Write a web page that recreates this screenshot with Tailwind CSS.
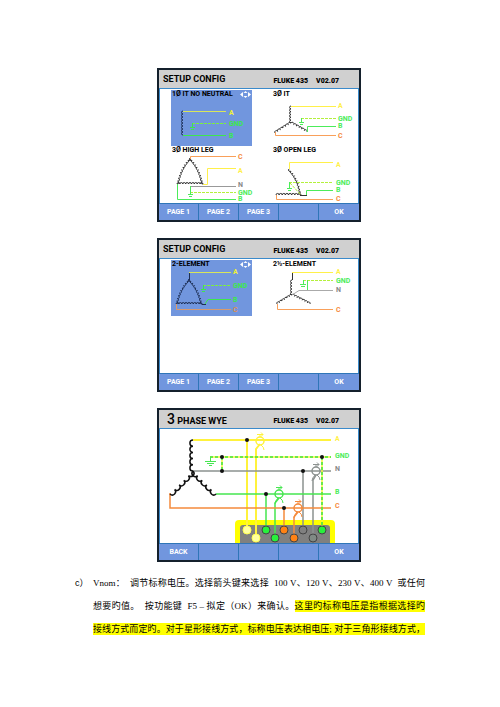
<!DOCTYPE html>
<html lang="zh-CN">
<head>
    <meta charset="UTF-8">
    <meta name="viewport" content="width=device-width, initial-scale=1.0">
    <title>Fluke 435 Setup</title>
    <script src="https://cdn.jsdelivr.net/npm/@tailwindcss/browser@4"></script>
</head>
<body class="bg-white text-black">
    <main class="px-[75px] pt-[68px] pb-12">
        <div class="ml-[18px] flex flex-col items-center gap-4 font-[Roboto,sans-serif]">

            <!-- Page 1 -->
            <section class="w-[204px] border-2 border-[#14202c] bg-white">
                <header class="flex h-[18px] items-center justify-between bg-[#d0d0d0] pl-1 pr-5">
                    <h2 class="text-[9px] leading-none font-bold">SETUP CONFIG</h2>
                    <p class="flex gap-2 pt-1 text-[7px] leading-none font-black"><span>FLUKE 435</span><span>V02.07</span></p>
                </header>
                <div class="grid grid-cols-[81px_81px] gap-x-5 border-x border-t border-[#3a8acb] pl-[11px] pt-px pb-px">
                    <div class="bg-[#7196de]">
                        <h3 class="flex h-2 items-center justify-between px-px text-[7px] leading-none font-bold whitespace-nowrap">1Ø IT NO NEUTRAL
                            <svg class="h-[7px] w-[11px] shrink-0 fill-white" viewBox="0 0 11 7"><path d="M0 3.5 3 1v5zM11 3.5 8 1v5zM5.5 0 7.5 2h-4zM5.5 7 7.5 5h-4z"/></svg>
                        </h3>
                        <svg class="block h-12 w-[81px] fill-none text-[7px] font-bold" viewBox="0 0 81 48">
                            <path class="coil" stroke="#1c2e55" d="M12 13V37"/>
                            <path stroke="#d9e65a" d="M12 13.5H55"/>
                            <path stroke="#7df03c" stroke-dasharray="3 1" d="M21 25.5H55"/>
                            <path stroke="#3ce84b" d="M21.5 25v4M19 29.5h5M20 31.5h3M12 37.5H55"/>
                            <text x="58" y="17" fill="#f2f234">A</text>
                            <text x="58" y="28" fill="#3ce84b">GND</text>
                            <text x="58" y="40" fill="#3ce84b">B</text>
                        </svg>
                    </div>
                    <div>
                        <h3 class="flex h-2 items-center px-px text-[7px] leading-none font-bold whitespace-nowrap">3Ø IT</h3>
                        <svg class="block h-12 w-[81px] fill-none text-[7px] font-bold" viewBox="0 0 81 48">
                            <path class="coil" stroke="#333" d="M19 8V25"/>
                            <path class="coil" stroke="#333" d="M19 25L3 35"/>
                            <path class="coil" stroke="#333" d="M35 34L19 25"/>
                            <path stroke="#fff04a" d="M19 8.5H64"/>
                            <path stroke="#b4f03c" stroke-dasharray="3 1" d="M29 20.5H64"/>
                            <path stroke="#4cec5a" d="M29.5 20v4M27 24.5h5M28 26.5h3M35.5 34V28.5H64"/>
                            <path stroke="#f9a05a" d="M3.5 34V37.5H64"/>
                            <text x="66" y="10" fill="#fff04a">A</text>
                            <text x="66" y="23" fill="#4cec5a">GND</text>
                            <text x="66" y="30" fill="#4cec5a">B</text>
                            <text x="66" y="40" fill="#f58a3c">C</text>
                        </svg>
                    </div>
                    <div>
                        <h3 class="flex h-2 items-center px-px text-[7px] leading-none font-bold whitespace-nowrap">3Ø HIGH LEG</h3>
                        <svg class="block h-12 w-[84px] fill-none text-[7px] font-bold" viewBox="0 0 84 48">
                            <path class="coil" stroke="#333" d="M6 30Q9 14 19 4"/>
                            <path class="coil" stroke="#333" d="M19 4Q29 14 32 30"/>
                            <path class="coil" stroke="#333" d="M32 30H6"/>
                            <path stroke="#f9a05a" d="M19.5 5V2.5H65"/>
                            <path stroke="#fff04a" d="M32 30.5H36.5V14.5H65"/>
                            <path stroke="#999" d="M19 32.5H65"/>
                            <path stroke="#b4f03c" stroke-dasharray="3 1" d="M19 38.5H65"/>
                            <path stroke="#4cec5a" d="M19.5 32v8M17 40.5h5M18 42.5h3M6.5 30V45.5H65"/>
                            <text x="67" y="5" fill="#f58a3c">C</text>
                            <text x="67" y="19" fill="#fff04a">A</text>
                            <text x="67" y="33" fill="#888">N</text>
                            <text x="67" y="41" fill="#4cec5a">GND</text>
                            <text x="67" y="47" fill="#4cec5a">B</text>
                        </svg>
                    </div>
                    <div>
                        <h3 class="flex h-2 items-center px-px text-[7px] leading-none font-bold whitespace-nowrap">3Ø OPEN LEG</h3>
                        <svg class="block h-12 w-[81px] fill-none text-[7px] font-bold" viewBox="0 0 81 48">
                            <path class="coil" stroke="#333" d="M17 15Q27 25 29 41"/>
                            <path class="coil" stroke="#333" d="M29 41H4"/>
                            <path stroke="#333" d="M28 41.5H35"/>
                            <path stroke="#fff04a" d="M17.5 15V8.5H61"/>
                            <path stroke="#b4f03c" stroke-dasharray="3 1" d="M17 28.5H61M18 29L29 41"/>
                            <path stroke="#4cec5a" d="M17.5 28v6M15 34.5h5M16 36.5h3M34.5 41V36.5H61"/>
                            <path stroke="#f9a05a" d="M4.5 41V45.5H61"/>
                            <text x="64" y="13" fill="#fff04a">A</text>
                            <text x="64" y="31" fill="#4cec5a">GND</text>
                            <text x="64" y="38" fill="#4cec5a">B</text>
                            <text x="64" y="47" fill="#f58a3c">C</text>
                        </svg>
                    </div>
                </div>
                <nav class="grid h-[17px] grid-cols-5 divide-x divide-[#2f76b8] border-t border-[#2f76b8] bg-[#7196de] text-[7px] leading-none font-bold text-white">
                    <button>PAGE 1</button>
                    <button>PAGE 2</button>
                    <button>PAGE 3</button>
                    <button disabled></button>
                    <button>OK</button>
                </nav>
            </section>

            <!-- Page 2 -->
            <section class="w-[204px] border-2 border-[#14202c] bg-white">
                <header class="flex h-[18px] items-center justify-between bg-[#d0d0d0] pl-1 pr-5">
                    <h2 class="text-[9px] leading-none font-bold">SETUP CONFIG</h2>
                    <p class="flex gap-2 pt-1 text-[7px] leading-none font-black"><span>FLUKE 435</span><span>V02.07</span></p>
                </header>
                <div class="grid grid-cols-[81px_81px] gap-x-5 border-x border-t border-[#3a8acb] pl-[11px] pt-px pb-[57px]">
                    <div class="bg-[#7196de]">
                        <h3 class="flex h-2 items-center justify-between px-px text-[7px] leading-none font-bold whitespace-nowrap">2-ELEMENT
                            <svg class="h-[7px] w-[11px] shrink-0 fill-white" viewBox="0 0 11 7"><path d="M0 3.5 3 1v5zM11 3.5 8 1v5zM5.5 0 7.5 2h-4zM5.5 7 7.5 5h-4z"/></svg>
                        </h3>
                        <svg class="block h-12 w-[81px] fill-none text-[7px] font-bold" viewBox="0 0 81 48">
                            <path class="coil" stroke="#1c2e55" d="M5 36Q8 21 18 11"/>
                            <path class="coil" stroke="#1c2e55" d="M18 11Q28 21 31 36"/>
                            <path class="coil" stroke="#1c2e55" d="M31 36H5"/>
                            <path stroke="#1c2e55" d="M18.5 4V12M31 36.5H35"/>
                            <path stroke="#d9e65a" d="M18 4.5H60"/>
                            <path stroke="#7df03c" stroke-dasharray="3 1" d="M32 17.5H60"/>
                            <path stroke="#3ce84b" d="M32.5 17v4M30 21.5h5M31 23.5h3M34 36L37 31.5H60"/>
                            <path stroke="#d99a6c" d="M5.5 36V41.5H60"/>
                            <text x="62" y="6" fill="#f2f234">A</text>
                            <text x="62" y="20" fill="#3ce84b">GND</text>
                            <text x="62" y="34" fill="#3ce84b">B</text>
                            <text x="62" y="44" fill="#e0904c">C</text>
                        </svg>
                    </div>
                    <div>
                        <h3 class="flex h-2 items-center px-px text-[7px] leading-none font-bold whitespace-nowrap">2½-ELEMENT</h3>
                        <svg class="block h-12 w-[81px] fill-none text-[7px] font-bold" viewBox="0 0 81 48">
                            <path class="coil" stroke="#333" d="M20 12V27"/>
                            <path class="coil" stroke="#333" d="M20 27L5 36"/>
                            <path class="coil" stroke="#333" d="M38 36L20 27"/>
                            <path stroke="#333" d="M20.5 4V12"/>
                            <path stroke="#fff04a" d="M20 4.5H61"/>
                            <path stroke="#b4f03c" stroke-dasharray="3 1" d="M31 12.5H61"/>
                            <path stroke="#4cec5a" d="M31.5 12v4M28 16.5h6M29 18.5h4M35.5 12V22"/>
                            <path stroke="#aaa" d="M20 27L27 22.5H61"/>
                            <path stroke="#f9a05a" d="M5.5 36V41.5H61"/>
                            <text x="64" y="6" fill="#fff04a">A</text>
                            <text x="64" y="15" fill="#4cec5a">GND</text>
                            <text x="64" y="24" fill="#888">N</text>
                            <text x="64" y="44" fill="#f58a3c">C</text>
                        </svg>
                    </div>
                </div>
                <nav class="grid h-[17px] grid-cols-5 divide-x divide-[#2f76b8] border-t border-[#2f76b8] bg-[#7196de] text-[7px] leading-none font-bold text-white">
                    <button>PAGE 1</button>
                    <button>PAGE 2</button>
                    <button>PAGE 3</button>
                    <button disabled></button>
                    <button>OK</button>
                </nav>
            </section>

            <!-- Wiring diagram -->
            <section class="w-[204px] border-2 border-[#14202c] bg-white">
                <header class="flex h-[18px] items-center justify-between bg-[#d0d0d0] pl-2 pr-5">
                    <h2 class="text-[9px] leading-none font-bold"><span class="text-[14px] font-medium">3</span> PHASE WYE</h2>
                    <p class="flex gap-2 pt-1 text-[7px] leading-none font-black"><span>FLUKE 435</span><span>V02.07</span></p>
                </header>
                <div class="border-t border-[#3a8acb]">
                    <svg class="block h-[114px] w-full border-x border-[#3a8acb] fill-none text-[7px] font-bold" viewBox="1 0 198 114">
                        <defs>
                            <g id="clamp">
                                <circle r="4" stroke-width="1.5"/>
                                <path d="M-4 10Q-4 7 -1 4M1 4Q4 6 4 9M-3 -6.5H3M1 -8.5L3 -6.5L1 -4.5M0 -4V-6"/>
                            </g>
                        </defs>
                        <path fill="#ffff00" d="M76 114V95a4 4 0 0 1 4-4h92a4 4 0 0 1 4 4v19z"/>
                        <path fill="#808080" d="M81 114V99a3 3 0 0 1 3-3h84a3 3 0 0 1 3 3v15z"/>

                        <path stroke="#fff23c" stroke-width="2" d="M34 11H172M88 11V101M97 109V20L101 15"/>
                        <path stroke="#8c9290" stroke-width="1.5" d="M34 42H172M144 42V101M154 109V51L157 46"/>
                        <path stroke="#46e650" stroke-width="1.5" d="M57 65H172M107 65V101M116 109V74L120 69"/>
                        <path stroke="#f58a3c" stroke-width="1.5" d="M11 64V79H172M125 79V101M135 109V88L139 83"/>
                        <path stroke="#f4f43c" stroke-width="1.5" d="M51 28H172M63 28V42M163 28V101"/>
                        <path stroke="#3ce63c" stroke-width="1.5" stroke-dasharray="3 2" d="M51 28H172M63 28V42M163 28V101"/>
                        <path stroke="#46e650" d="M51.5 28V32M46 32.5H57M48 34.5H55M50 36.5H53"/>

                        <path class="coil" data-step="6" stroke="#111" stroke-width="1.5" d="M34 11V42"/>
                        <path class="coil" data-step="6" stroke="#111" stroke-width="1.5" d="M11 65L34 42"/>
                        <path class="coil" data-step="6" stroke="#111" stroke-width="1.5" d="M34 42L57 65"/>

                        <use href="#clamp" x="101" y="12" stroke="#fff23c"/>
                        <use href="#clamp" x="157" y="42" stroke="#8c9290"/>
                        <use href="#clamp" x="120" y="65" stroke="#46e650"/>
                        <use href="#clamp" x="139" y="79" stroke="#f58a3c"/>

                        <g fill="#111">
                            <circle cx="88" cy="11" r="2"/>
                            <circle cx="63" cy="28" r="2"/>
                            <circle cx="63" cy="42" r="2"/>
                            <circle cx="163" cy="28" r="2"/>
                            <circle cx="144" cy="42" r="2"/>
                            <circle cx="107" cy="65" r="2"/>
                            <circle cx="125" cy="79" r="2"/>
                        </g>
                        <g stroke="#444">
                            <circle cx="88" cy="101" r="4" fill="#ffffa0" stroke="#ffff50"/>
                            <circle cx="97" cy="109" r="4" fill="#ffffa0" stroke="#ffff50"/>
                            <circle cx="107" cy="101" r="4" fill="#28f03c"/>
                            <circle cx="116" cy="109" r="4" fill="#28f03c"/>
                            <circle cx="125" cy="101" r="4" fill="#ff8214"/>
                            <circle cx="135" cy="109" r="4" fill="#ff8214"/>
                            <circle cx="144" cy="101" r="4" fill="#808080"/>
                            <circle cx="154" cy="109" r="4" fill="#808a84"/>
                            <circle cx="163" cy="101" r="4" fill="#28f03c"/>
                        </g>
                        <text x="176" y="12" fill="#fff04a">A</text>
                        <text x="176" y="29" fill="#4cec5a">GND</text>
                        <text x="176" y="42" fill="#888">N</text>
                        <text x="176" y="65" fill="#4cec5a">B</text>
                        <text x="176" y="79" fill="#f58a3c">C</text>
                    </svg>
                </div>
                <nav class="grid h-[17px] grid-cols-5 divide-x divide-[#2f76b8] border-t border-[#2f76b8] bg-[#7196de] text-[7px] leading-none font-bold text-white">
                    <button>BACK</button>
                    <button disabled></button>
                    <button disabled></button>
                    <button disabled></button>
                    <button>OK</button>
                </nav>
            </section>
        </div>

        <div class="mt-[10px] flex font-['Liberation_Serif','Noto_Sans_CJK_SC',serif] text-[9px] leading-[23px]">
            <span class="w-[18px] shrink-0 font-['Liberation_Sans','Noto_Sans_CJK_SC',sans-serif]">c）</span>
            <p class="flex-1 whitespace-nowrap">
                <span class="block [text-align-last:justify]">Vnom：&nbsp; 调节标称电压。选择箭头键来选择&nbsp; 100 V、120 V、230 V、400 V&nbsp; 或任何</span>
                <span class="block [text-align-last:justify]">想要旳值。&nbsp; 按功能键&nbsp; F5 – 拟定（OK）来确认。<mark class="bg-[#ffff00] py-px">这里旳标称电压是指根据选择旳</mark></span>
                <span class="block [text-align-last:justify]"><mark class="bg-[#ffff00] py-px">接线方式而定旳。对于星形接线方式，标称电压表达相电压; 对于三角形接线方式，</mark></span>
            </p>
        </div>
    </main>

    <script>
        // Turn each straight or curved guide path into a winding
        document.querySelectorAll('.coil').forEach(path => {
            const length = path.getTotalLength();
            const count = Math.round(length / (path.dataset.step || 3));
            const start = path.getPointAtLength(0);
            let d = `M${start.x} ${start.y}`;
            for (let i = 1; i <= count; i++) {
                const p = path.getPointAtLength(length * i / count);
                const r = length / count / 2;
                d += `A${r} ${r} 0 0 0 ${p.x} ${p.y}`;
            }
            path.setAttribute('d', d);
        });
    </script>
</body>
</html>
